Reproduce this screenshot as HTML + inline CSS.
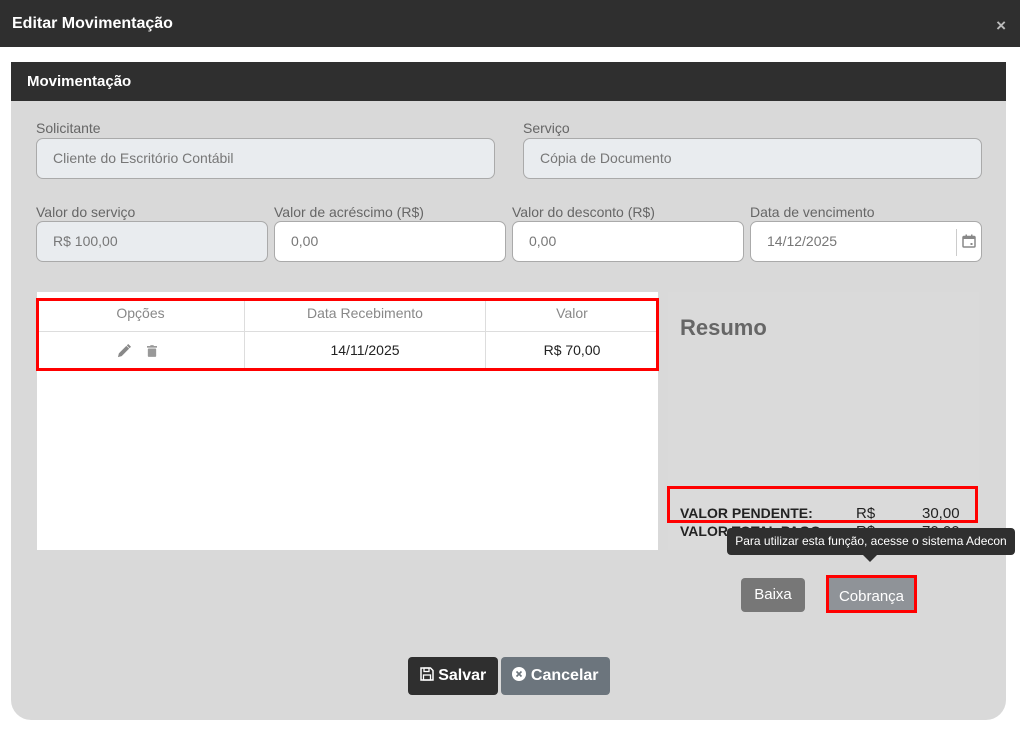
<!DOCTYPE html>
<html><head><meta charset="utf-8"><style>
*{box-sizing:border-box;margin:0;padding:0}
body{width:1020px;height:741px;background:#fff;font-family:"Liberation Sans",sans-serif;position:relative;overflow:hidden}
.a{position:absolute}
.top{left:0;top:0;width:1020px;height:47px;background:#2f2f2f;color:#fff;font-weight:bold;font-size:16px;line-height:47px;padding-left:12px}
.x{right:14px;top:0;color:#bbb;font-size:17px;line-height:52px;font-weight:bold}
.panel{left:11px;top:62px;width:995px;height:658px;background:#d9d9d9;border-radius:0 0 20px 20px}
.ph{left:11px;top:62px;width:995px;height:39px;background:#2f2f2f;color:#fff;font-weight:bold;font-size:15px;line-height:40px;padding-left:16px}
.lbl{font-size:14px;color:#666}
.in{height:41px;border:1px solid #aaa;border-radius:7px;background:#fff;font-size:14px;color:#777;line-height:39px;padding-left:16px}
.dis{background:#e9ecef}
.tbl{left:37px;top:292px;width:621px;height:258px;background:#fff}
.sum{left:668px;top:292px;width:311px;height:258px;background:#dadada}
.red{border:3px solid #f00}
.th{font-size:14px;color:#888;text-align:center;top:305px}
.td{font-size:14px;color:#222;text-align:center;top:342px}
.btn{border-radius:4px;color:#fff;font-size:15px;text-align:center}
</style></head><body>
<div class="a top">Editar Movimentação</div>
<div class="a x">×</div>
<div class="a panel"></div>
<div class="a ph">Movimentação</div>

<div class="a lbl" style="left:36px;top:120px">Solicitante</div>
<div class="a in dis" style="left:36px;top:138px;width:459px">Cliente do Escritório Contábil</div>
<div class="a lbl" style="left:523px;top:120px">Serviço</div>
<div class="a in dis" style="left:523px;top:138px;width:459px">Cópia de Documento</div>

<div class="a lbl" style="left:36px;top:204px">Valor do serviço</div>
<div class="a in dis" style="left:36px;top:221px;width:232px">R$ 100,00</div>
<div class="a lbl" style="left:274px;top:204px">Valor de acréscimo (R$)</div>
<div class="a in" style="left:274px;top:221px;width:232px">0,00</div>
<div class="a lbl" style="left:512px;top:204px">Valor do desconto (R$)</div>
<div class="a in" style="left:512px;top:221px;width:232px">0,00</div>
<div class="a lbl" style="left:750px;top:204px">Data de vencimento</div>
<div class="a in" style="left:750px;top:221px;width:232px">14/12/2025</div>
<div class="a" style="left:956px;top:229px;width:1px;height:27px;background:#ccc"></div>
<svg class="a" style="left:962px;top:234px" width="14" height="14" viewBox="0 0 14 14"><rect x="1" y="2.5" width="12" height="10.5" rx="1" fill="none" stroke="#888" stroke-width="1.5"/><rect x="1" y="2.5" width="12" height="2.5" fill="#888"/><rect x="3.5" y="0.5" width="1.5" height="3" fill="#888"/><rect x="9" y="0.5" width="1.5" height="3" fill="#888"/><rect x="8.5" y="9" width="2" height="2" fill="#888"/></svg>

<div class="a tbl"></div>
<div class="a" style="left:37px;top:331px;width:621px;height:1px;background:#ddd"></div>
<div class="a" style="left:244px;top:298px;width:1px;height:70px;background:#ddd"></div>
<div class="a" style="left:485px;top:298px;width:1px;height:70px;background:#ddd"></div>
<div class="a th" style="left:37px;width:207px">Opções</div>
<div class="a th" style="left:245px;width:240px">Data Recebimento</div>
<div class="a th" style="left:486px;width:172px">Valor</div>
<svg class="a" style="left:117px;top:344px" width="14" height="14" viewBox="0 0 15 15"><path d="M1 14 L2 10 L10 2 L13 5 L5 13 Z" fill="#888"/><path d="M10.5 1.5 L12 0 L15 3 L13.5 4.5Z" fill="#888"/></svg>
<svg class="a" style="left:147px;top:345px" width="10" height="12" viewBox="0 0 12 14"><rect x="0" y="1" width="12" height="2" fill="#999"/><rect x="4" y="0" width="4" height="2" fill="#999"/><rect x="1" y="4" width="10" height="10" rx="1" fill="#999"/></svg>
<div class="a td" style="left:245px;width:240px">14/11/2025</div>
<div class="a td" style="left:486px;width:172px">R$ 70,00</div>
<div class="a red" style="left:36px;top:298px;width:623px;height:73px"></div>

<div class="a sum"></div>
<div class="a" style="left:680px;top:315px;font-size:22px;font-weight:bold;color:#666">Resumo</div>
<div class="a" style="left:680px;top:505px;font-size:14px;font-weight:bold;color:#222">VALOR PENDENTE:</div>
<div class="a" style="left:856px;top:505px;font-size:15px;color:#222">R$</div>
<div class="a" style="left:922px;top:505px;font-size:15px;color:#222">30,00</div>
<div class="a" style="left:680px;top:523px;font-size:14px;font-weight:bold;color:#222">VALOR TOTAL PAGO:</div>
<div class="a" style="left:856px;top:523px;font-size:15px;color:#222">R$</div>
<div class="a" style="left:922px;top:523px;font-size:15px;color:#222">70,00</div>
<div class="a red" style="left:667px;top:486px;width:311px;height:37px"></div>
<div class="a" style="left:727px;top:528px;width:288px;height:27px;background:#2f2f2f;border-radius:4px;color:#fff;font-size:12px;line-height:27px;text-align:center">Para utilizar esta função, acesse o sistema Adecon</div>
<div class="a" style="left:863px;top:555px;width:0;height:0;border-left:7px solid transparent;border-right:7px solid transparent;border-top:7px solid #2f2f2f"></div>

<div class="a btn" style="left:741px;top:578px;width:64px;height:34px;line-height:34px;background:#777">Baixa</div>
<div class="a btn" style="left:826px;top:575px;width:91px;height:38px;line-height:38px;background:#8f9398;border:3px solid #f00;border-radius:0">Cobrança</div>

<div class="a btn" style="left:408px;top:657px;width:90px;height:38px;line-height:38px;background:#2f2f2f;font-weight:bold;font-size:16px">
<svg width="14" height="14" viewBox="0 0 14 14" style="vertical-align:-1px"><path d="M1 1 H10.5 L13 3.5 V13 H1 Z" fill="none" stroke="#fff" stroke-width="1.5"/><rect x="4" y="1" width="5" height="3.5" fill="none" stroke="#fff" stroke-width="1.3"/><rect x="3.5" y="8" width="7" height="5" fill="none" stroke="#fff" stroke-width="1.3"/></svg> Salvar</div>
<div class="a btn" style="left:501px;top:657px;width:109px;height:38px;line-height:38px;background:#6c757d;font-weight:bold;font-size:16px">
<svg width="14" height="14" viewBox="0 0 14 14" style="vertical-align:-1px"><circle cx="7" cy="7" r="7" fill="#fff"/><path d="M4.5 4.5 L9.5 9.5 M9.5 4.5 L4.5 9.5" stroke="#6c757d" stroke-width="1.6"/></svg> Cancelar</div>
</body></html>
